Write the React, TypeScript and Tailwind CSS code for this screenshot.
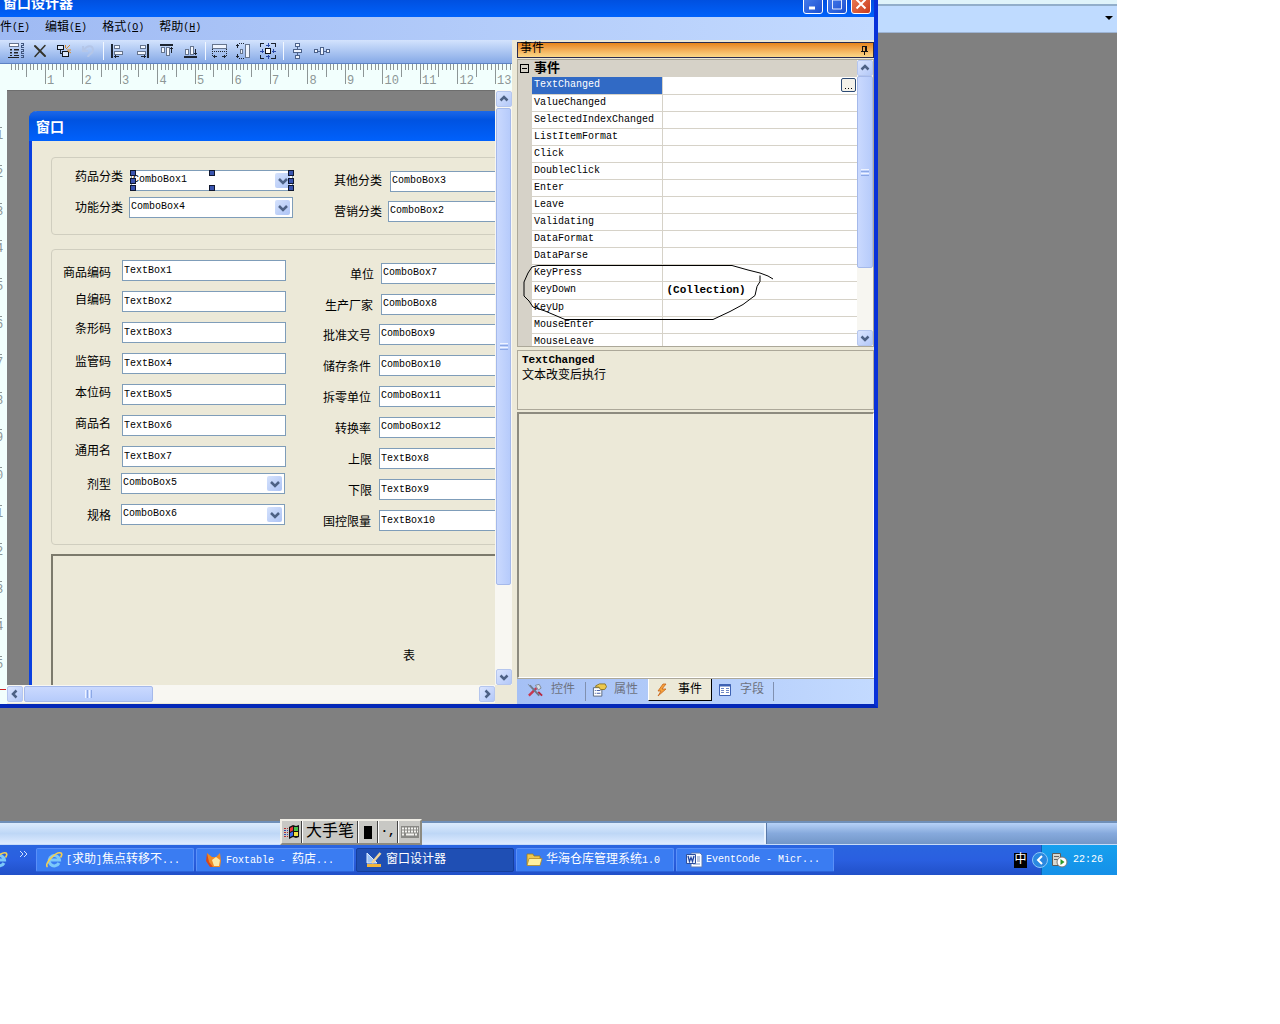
import type { ReactNode } from "react";

const MONO = "font-['Liberation_Mono','Noto_Sans_CJK_SC',monospace]";

/* Latin runs are set at 10px and Chinese runs at 12px, like a 12px bitmap face. */
function Mixed({ children }: { children: string }) {
  const parts = children.split(/([\u4e00-\u9fff]+)/).filter(Boolean);
  return (
    <>
      {parts.map((p, i) =>
        /[\u4e00-\u9fff]/.test(p) ? (
          <span key={i} className="text-[12px]">{p}</span>
        ) : (
          <span key={i}>{p}</span>
        )
      )}
    </>
  );
}

/* ---------- toolbar icons ---------- */
function Icon({ children }: { children: ReactNode }) {
  return (
    <svg width="18" height="18" viewBox="0 0 18 18" fill="none" stroke="#1c2430" strokeWidth="1" shapeRendering="crispEdges" className="shrink-0">
      {children}
    </svg>
  );
}

const tools: { name: string; icon: ReactNode }[][] = [
  [
    {
      name: "Tab 次序",
      icon: (
        <Icon>
          <path d="M2.500 1.500h9v3h-9z" stroke="#66758e" fill="#fff" />
          <path d="M3 7.500h2M7 7.500h5M3 10.500h2M7 10.500h4M3 13.500h2M7 13.500h5M1 15.500h11" stroke="#222" />
          <path d="M3 8.500h2M7 8.500h5M3 11.500h2M7 11.500h4" stroke="#66758e" />
          <path d="M14 1.500h2v2h-2v2h3M14 7.500h2v2h-2v2h3M14 13.500h2v2h-2" stroke="#40557c" />
        </Icon>
      ),
    },
    {
      name: "删除",
      icon: (
        <svg width="18" height="18" viewBox="0 0 18 18" fill="none" stroke="#33332a" strokeLinecap="round" className="shrink-0">
          <path d="M4 4l10 10" strokeWidth="2" />
          <path d="M14 3.500L4 14.500" strokeWidth="1.500" />
        </svg>
      ),
    },
    {
      name: "复制",
      icon: (
        <Icon>
          <path d="M2.500 3.500h6v4h-6zM7.500 9.500h6v5h-6z" stroke="#10151c" fill="#dce8fb" />
          <path d="M5.500 8v3.500h2" />
          <path d="M11 7l4-4M12 8h4M10.500 6V3M13 9l3 2" stroke="#d98b2b" shapeRendering="auto" />
        </Icon>
      ),
    },
    {
      name: "撤消",
      icon: (
        <svg width="18" height="18" viewBox="0 0 18 18" fill="none" stroke="#b4c6e8" strokeWidth="2" className="shrink-0">
          <path d="M5 8c3-5 9-5 9 0 0 4-5 4-5 7" />
          <path d="M4 4v5h5" />
        </svg>
      ),
    },
  ],
  [
    {
      name: "左对齐",
      icon: (
        <Icon>
          <path d="M3 2v14" strokeWidth="2" />
          <path d="M5.500 3.500h5v3h-5zM5.500 9.500h8v3h-8z" fill="#f4f8ff" stroke="#66758e" />
          <path d="M5 14.500h5M6.500 13v3" />
        </Icon>
      ),
    },
    {
      name: "右对齐",
      icon: (
        <Icon>
          <path d="M15 2v14" strokeWidth="2" />
          <path d="M7.500 3.500h5v3h-5zM4.500 9.500h8v3h-8z" fill="#f4f8ff" stroke="#66758e" />
          <path d="M8 14.500h5M11.500 13v3" />
        </Icon>
      ),
    },
    {
      name: "顶端对齐",
      icon: (
        <Icon>
          <path d="M3 3h13" strokeWidth="2" />
          <path d="M4.500 5.500h3v5h-3zM9.500 5.500h3v8h-3z" fill="#f4f8ff" stroke="#66758e" />
          <path d="M14.500 5v6M13 6.500h3" />
        </Icon>
      ),
    },
    {
      name: "底端对齐",
      icon: (
        <Icon>
          <path d="M3 15h13" strokeWidth="2" />
          <path d="M4.500 7.500h3v5h-3zM9.500 4.500h3v8h-3z" fill="#f4f8ff" stroke="#66758e" />
          <path d="M14.500 7v6M13 11.500h3" />
        </Icon>
      ),
    },
  ],
  [
    {
      name: "等宽",
      icon: (
        <Icon>
          <path d="M1.500 2.500h14v4h-14z" fill="#eef4ff" stroke="#66758e" />
          <path d="M1.500 7v8M15.500 7v8M3 9.500h12" strokeDasharray="1 1" />
          <path d="M2 14.500h4M11 14.500h4M3.500 13v3M13.500 13v3" />
        </Icon>
      ),
    },
    {
      name: "等高",
      icon: (
        <Icon>
          <path d="M10.500 2.500h4v13h-4z" fill="#eef4ff" stroke="#66758e" />
          <path d="M5.500 7.500h2v4h-2z" fill="#eef4ff" stroke="#66758e" />
          <path d="M4 1.500h6M4 16.500h6" strokeDasharray="1 1" />
          <path d="M2.500 2v4M2.500 12v4M1 3.500h3M1 14.500h3" />
        </Icon>
      ),
    },
    {
      name: "等大小",
      icon: (
        <Icon>
          <path d="M1.500 5V1.500H5M12 1.500h4.500V5M16.500 13v3.500H12M5 16.500H1.500V13" />
          <path d="M6.500 6.500h5v5h-5z" fill="#fff" stroke="#111" />
          <path d="M9 1v4M9 13v4M1 9h4M13 9h4M7 3.500h4M7 14.500h4M3.500 7v4M14.500 7v4" stroke="#2a49a8" />
        </Icon>
      ),
    },
  ],
  [
    {
      name: "垂直间距",
      icon: (
        <Icon>
          <path d="M6.500 1.500h4v3h-4zM4.500 7.500h8v3h-8zM6.500 13.500h4v3h-4zM8.500 5v2M8.500 11v2" fill="#eef4ff" stroke="#4c628a" />
        </Icon>
      ),
    },
    {
      name: "水平间距",
      icon: (
        <Icon>
          <path d="M1.500 7.500h3v3h-3zM7.500 5.500h3v7h-3zM13.500 7.500h3v3h-3zM5 9h2M11 9h2" fill="#eef4ff" stroke="#4c628a" />
        </Icon>
      ),
    },
  ],
];

/* ---------- rulers ---------- */
function TopRuler() {
  const ticks = Array.from({ length: 135 }, (_, i) => i + 1);
  return (
    <svg className="block h-[26px] w-full bg-[#f2fffd]" shapeRendering="crispEdges">
      {ticks.map((i) => {
        const x = Math.round(7 + i * 3.75);
        const h = i % 10 === 0 ? 20 : i % 5 === 0 ? 13 : 6;
        return <path key={i} d={`M${x + 0.5} 0v${h}`} stroke="#8d9696" />;
      })}
      {Array.from({ length: 13 }, (_, i) => (
        <text key={i} x={47 + i * 37.5} y="20" fontSize="12" fill="#8d9696" className={MONO}>
          {i + 1}
        </text>
      ))}
    </svg>
  );
}

function SideRuler() {
  const digits = ["1", "2", "3", "4", "5", "6", "7", "8", "9", "0", "1", "2", "3", "4", "5"];
  return (
    <svg className="block w-[7px] shrink-0 self-stretch bg-[#f2fffd]" shapeRendering="crispEdges">
      {digits.map((d, i) => (
        <g key={i}>
          <path d={`M0 ${Math.round(37 + i * 37.8)}.5h2`} stroke="#8d9696" />
          <text x="-4" y={49 + i * 37.8} fontSize="12" fill="#8d9696" className={MONO}>
            {d}
          </text>
        </g>
      ))}
      <path d="M0 599.5h6" stroke="#d02020" />
    </svg>
  );
}

/* ---------- scroll bars ---------- */
const chevrons = {
  up: "M4.500 9.500L8 6l3.500 3.500",
  down: "M4.500 6.500L8 10l3.500-3.500",
  left: "M9.500 4.500L6 8l3.500 3.500",
  right: "M6.500 4.500L10 8l-3.500 3.500",
};
function Arrow({ dir }: { dir: keyof typeof chevrons }) {
  return (
    <button
      type="button"
      aria-label={dir}
      className="flex size-4 shrink-0 items-center justify-center rounded-xs border border-[#b5c6ee] bg-linear-to-br from-[#dbe5fe] to-[#b3c8f8]"
    >
      <svg width="16" height="16" viewBox="0 0 16 16" fill="none" stroke="#4d6185" strokeWidth="2.500" className="shrink-0">
        <path d={chevrons[dir]} />
      </svg>
    </button>
  );
}

/* ---------- designer canvas ---------- */
type Control = { kind: "text" | "combo"; name: string; label: string; x: number; y: number; w: number; lx: number; ly: number };

const controls: Control[] = [
  { kind: "combo", name: "ComboBox1", label: "药品分类", x: 99, y: 29, w: 162, lx: 43, ly: 29 },
  { kind: "combo", name: "ComboBox4", label: "功能分类", x: 97, y: 56, w: 164, lx: 43, ly: 60 },
  { kind: "combo", name: "ComboBox3", label: "其他分类", x: 358, y: 30, w: 164, lx: 302, ly: 33 },
  { kind: "combo", name: "ComboBox2", label: "营销分类", x: 356, y: 60, w: 164, lx: 302, ly: 64 },
  { kind: "text", name: "TextBox1", label: "商品编码", x: 90, y: 119, w: 164, lx: 31, ly: 125 },
  { kind: "text", name: "TextBox2", label: "自编码", x: 90, y: 150, w: 164, lx: 43, ly: 152 },
  { kind: "text", name: "TextBox3", label: "条形码", x: 90, y: 181, w: 164, lx: 43, ly: 181 },
  { kind: "text", name: "TextBox4", label: "监管码", x: 90, y: 212, w: 164, lx: 43, ly: 214 },
  { kind: "text", name: "TextBox5", label: "本位码", x: 90, y: 243, w: 164, lx: 43, ly: 245 },
  { kind: "text", name: "TextBox6", label: "商品名", x: 90, y: 274, w: 164, lx: 43, ly: 276 },
  { kind: "text", name: "TextBox7", label: "通用名", x: 90, y: 305, w: 164, lx: 43, ly: 303 },
  { kind: "combo", name: "ComboBox5", label: "剂型", x: 89, y: 332, w: 164, lx: 55, ly: 337 },
  { kind: "combo", name: "ComboBox6", label: "规格", x: 89, y: 363, w: 164, lx: 55, ly: 368 },
  { kind: "combo", name: "ComboBox7", label: "单位", x: 349, y: 122, w: 164, lx: 318, ly: 127 },
  { kind: "combo", name: "ComboBox8", label: "生产厂家", x: 349, y: 153, w: 164, lx: 293, ly: 158 },
  { kind: "combo", name: "ComboBox9", label: "批准文号", x: 347, y: 183, w: 164, lx: 291, ly: 188 },
  { kind: "combo", name: "ComboBox10", label: "储存条件", x: 347, y: 214, w: 164, lx: 291, ly: 219 },
  { kind: "combo", name: "ComboBox11", label: "拆零单位", x: 347, y: 245, w: 164, lx: 291, ly: 250 },
  { kind: "combo", name: "ComboBox12", label: "转换率", x: 347, y: 276, w: 164, lx: 303, ly: 281 },
  { kind: "text", name: "TextBox8", label: "上限", x: 347, y: 307, w: 164, lx: 316, ly: 312 },
  { kind: "text", name: "TextBox9", label: "下限", x: 347, y: 338, w: 164, lx: 316, ly: 343 },
  { kind: "text", name: "TextBox10", label: "国控限量", x: 347, y: 369, w: 164, lx: 291, ly: 374 },
];

const handles = [
  [98, 29], [177, 29], [256, 29],
  [98, 37], [256, 37],
  [98, 44], [177, 44], [256, 44],
];

function FormControl({ c }: { c: Control }) {
  return (
    <>
      <label htmlFor={c.name} className="absolute text-[12px] leading-4 whitespace-nowrap" style={{ left: c.lx, top: c.ly }}>
        {c.label}
      </label>
      <div className="absolute h-[21px] border border-[#7f9db9] bg-white" style={{ left: c.x, top: c.y, width: c.w }}>
        {c.kind === "text" ? (
          <input id={c.name} defaultValue={c.name} className="block h-[18px] w-full bg-transparent px-px text-[10px] leading-4 outline-none" />
        ) : (
          <>
            <select id={c.name} className="block h-[18px] w-full appearance-none bg-transparent px-px text-[10px] leading-4 outline-none">
              <option>{c.name}</option>
            </select>
            <span className="pointer-events-none absolute top-0.5 right-0.5 flex size-[15px] items-center justify-center rounded-xs bg-linear-to-br from-[#d5e2fc] to-[#adc3f5]">
              <svg width="10" height="8" viewBox="0 0 10 8" fill="none" stroke="#4d6185" strokeWidth="2.500">
                <path d="M1 2l4 4 4-4" />
              </svg>
            </span>
          </>
        )}
      </div>
    </>
  );
}

function DesignedForm() {
  return (
    <section className="absolute top-5 -right-8 -bottom-8 left-[22px] flex flex-col rounded-tl-lg border-l-[3px] border-[#0a40e0] bg-[#ece9d8]">
      <h2 className="-ml-[3px] flex h-[30px] items-center rounded-tl-lg bg-linear-to-b from-[#1c68e8] from-0% via-[#0053e1] via-30% to-[#0061fc] pt-1 pl-[7px] text-[14px] leading-4 font-bold text-white">
        窗口
      </h2>
      <div className="relative flex-1">
        <fieldset className="absolute top-4 -right-4 left-[19px] h-[78px] rounded-sm border border-[#d0cebf]" />
        <fieldset className="absolute top-[108px] -right-4 left-[19px] h-[296px] rounded-sm border border-[#d0cebf]" />
        {controls.map((c) => (
          <FormControl key={c.name} c={c} />
        ))}
        {handles.map(([x, y]) => (
          <span key={`${x}-${y}`} className="absolute size-1.5 border border-[#101830] bg-[#3a55b0]" style={{ left: x, top: y }} />
        ))}
        <div className="absolute top-[413px] right-[-250px] bottom-0 left-[19px] border-t-2 border-l-2 border-[#7c7a6c]">
          <span className="absolute top-[93px] left-[350px] text-[12px] leading-4">表</span>
        </div>
      </div>
    </section>
  );
}

/* ---------- event list ---------- */
const events = [
  "TextChanged", "ValueChanged", "SelectedIndexChanged", "ListItemFormat", "Click", "DoubleClick", "Enter", "Leave",
  "Validating", "DataFormat", "DataParse", "KeyPress", "KeyDown", "KeyUp", "MouseEnter", "MouseLeave",
];

function EventPanel() {
  return (
    <aside className="flex w-[357px] shrink-0 flex-col pt-0.5">
      <header className="flex h-4 items-start justify-between border border-[#2a2c50] bg-linear-to-b from-[#e78414] to-[#fbd887] px-0.5">
        <h2 className="-mt-px text-[12px] leading-[14px]">事件</h2>
        <button type="button" aria-label="固定" className="pt-0.5 pr-0.5">
          <svg width="9" height="10" viewBox="0 0 9 10" fill="none" stroke="#111" shapeRendering="crispEdges">
            <path d="M2.500 6V1.500h4V6M5.500 1v5M1 6.500h7M4.500 7v3" />
          </svg>
        </button>
      </header>

      <div className="relative mt-px flex h-[288px] border border-[#aca899] bg-white">
        <div className="min-w-0 flex-1 overflow-hidden">
          <div className="flex h-[17px] items-center gap-[5px] bg-[#d6d2c8] pl-0.5">
            <button type="button" aria-label="折叠" className="flex size-[9px] items-center justify-center border border-black text-black">
              <span className="h-px w-[5px] bg-black" />
            </button>
            <h3 className="text-[13px] leading-4 font-bold">事件</h3>
          </div>
          <table className="w-full table-fixed border-collapse border-l-[14px] border-[#d6d2c8] text-[10px] leading-4">
            <tbody>
              {events.map((e, i) => (
                <tr key={e} className="h-[17px]">
                  <th
                    scope="row"
                    className={
                      i === 0
                        ? "h-[17px] w-[137px] border-r border-b border-[#d6d2c8] bg-[#316ac5] p-0 pl-0.5 text-left font-normal text-white"
                        : "h-[17px] w-[137px] border-r border-b border-[#d6d2c8] p-0 pl-0.5 text-left font-normal"
                    }
                  >
                    {e}
                  </th>
                  <td className="border-b border-[#d6d2c8] p-0 pl-1">
                    {i === 0 && (
                      <button type="button" aria-label="编辑事件" className="float-right mr-px flex h-[14px] w-[15px] items-center justify-center gap-0.5 rounded-xs border border-[#2c4a74] bg-[#f4f2ea] pt-1.5">
                        <i className="size-px bg-black" />
                        <i className="size-px bg-black" />
                        <i className="size-px bg-black" />
                      </button>
                    )}
                    {e === "KeyDown" && <b className="text-[11px] font-bold">(Collection)</b>}
                  </td>
                </tr>
              ))}
            </tbody>
          </table>
        </div>
        <div className="flex w-4 shrink-0 flex-col bg-[#f7f6f1]">
          <Arrow dir="up" />
          <div className="flex h-[192px] flex-col items-center justify-center gap-px rounded-xs border border-[#a5b9ea] bg-linear-to-r from-[#cad9fe] to-[#b6cbfb]">
            <i className="h-px w-2 bg-[#eef3ff]" />
            <i className="h-px w-2 bg-[#8ca8e6]" />
            <i className="h-px w-2 bg-[#eef3ff]" />
            <i className="h-px w-2 bg-[#8ca8e6]" />
          </div>
          <div className="flex-1" />
          <Arrow dir="down" />
        </div>
        <svg className="pointer-events-none absolute top-[204px] left-[4px]" width="256" height="60" viewBox="0 0 256 60" fill="none" stroke="#000">
          <path d="M251 15L246 12 238 9 226 6 210 1.500H16L10 3 6 9 2 18v14l5 5 4 6 12 4 20 8.500h148l17-8 13-7 12-9 2-9 3-5v-6" />
        </svg>
      </div>

      <div className="mt-[3px] h-[60px] border border-[#aca899] px-1 pt-0.5 leading-4">
        <h3 className="text-[11px] leading-[15px] font-bold">TextChanged</h3>
        <p className="text-[12px] leading-4">文本改变后执行</p>
      </div>
      <div className="mt-0.5 h-[266px] border-t-2 border-r border-b border-l-2 border-t-[#8d8b7f] border-r-white border-b-white border-l-[#8d8b7f]" />

      <div role="tablist" className="flex h-[26px] items-start border-t border-[#aca899] bg-linear-to-r from-[#a5c0f5] to-[#c3daff] text-[12px] leading-4 text-[#6d7280]">
        <button type="button" role="tab" className="flex h-[22px] items-center gap-2 pl-[10px]">
          <svg width="16" height="16" viewBox="0 0 17 16" fill="none">
            <path d="M2 14l8-8" stroke="#c8374f" strokeWidth="2.500" />
            <path d="M3 3l10 11" stroke="#6c7888" strokeWidth="2" />
            <path d="M1 2l4 3M9 3l4-1 2 4-3 2z" stroke="#7d8794" fill="#d8dde4" />
            <path d="M12 10l4 4" stroke="#b6273e" strokeWidth="2" />
          </svg>
          控件
        </button>
        <span className="mx-[6px] ml-[10px] h-[19px] w-px self-center bg-[#8090b0]" />
        <button type="button" role="tab" className="flex h-[22px] items-center gap-[7px]">
          <svg width="15" height="16" viewBox="0 0 16 16">
            <path d="M1.500 5.500h9v9h-9z" fill="#fff" stroke="#58657c" />
            <path d="M3 8.500h1M3 11.500h1M5 8.500h4M5 11.500h4" stroke="#3a54a0" />
            <path d="M4 3.500l4-2h6l1.500 3-2 3H9L7.500 5H4z" fill="#edc84c" stroke="#8b752a" />
          </svg>
          属性
        </button>
        <button type="button" role="tab" aria-selected="true" className="ml-[10px] flex h-[22px] w-16 items-center gap-[9px] border-r border-b border-l border-r-black border-b-black border-l-white bg-[#ece9d8] pl-1.5 text-black">
          <svg width="14" height="16" viewBox="0 0 14 16">
            <path d="M8 2L3 9h3l-3 5 8-7H7l4-5z" fill="#f6a33c" stroke="#c8641c" strokeWidth=".8" />
          </svg>
          事件
        </button>
        <button type="button" role="tab" className="flex h-[22px] items-center gap-[8px] pl-[6px]">
          <svg width="14" height="14" viewBox="0 0 14 14">
            <path d="M1.500 1.500h11v11h-11z" fill="#fff" stroke="#3e62b4" />
            <path d="M1 2.500h12" stroke="#3e62b4" strokeWidth="2" />
            <path d="M3 5.500h3M3 7.500h3M3 9.500h3M8 5.500h3M8 7.500h3M8 9.500h3" stroke="#6d87c4" />
          </svg>
          字段
        </button>
        <span className="ml-[9px] h-[19px] w-px self-center bg-[#8090b0]" />
      </div>
    </aside>
  );
}

/* ---------- designer window ---------- */
const menus = [["件", "F"], ["编辑", "E"], ["格式", "O"], ["帮助", "H"]];

function DesignerWindow() {
  return (
    <main className="flex min-w-0 flex-1 flex-col border-r-4 border-b-4 border-[#0831d9] border-b-[#0428b8]">
      <header className="flex h-[17px] items-start justify-between overflow-hidden bg-linear-to-b from-[#0050e0] to-[#0062fb] pl-[3px]">
        <h1 className="-mt-1 text-[14px] leading-4 font-bold text-white">窗口设计器</h1>
        <div className="-mt-1.5 flex gap-1 pr-[3px]">
          <button type="button" aria-label="最小化" className="h-5 w-5 rounded-[3px] border border-white bg-linear-to-br from-[#4a80ee] to-[#1c4fd0]">
            <svg viewBox="0 0 18 18"><path d="M5 13h6" stroke="#fff" strokeWidth="3" /></svg>
          </button>
          <button type="button" aria-label="最大化" className="h-5 w-5 rounded-[3px] border border-white bg-linear-to-br from-[#4a80ee] to-[#1c4fd0]">
            <svg viewBox="0 0 18 18"><path d="M4.500 5h9v9h-9z" stroke="#dfe9ff" fill="none" strokeWidth="1" /></svg>
          </button>
          <button type="button" aria-label="关闭" className="h-5 w-5 rounded-[3px] border border-white bg-linear-to-br from-[#ee8058] to-[#c9391a]">
            <svg viewBox="0 0 18 18"><path d="M4.500 4.500l9 9M13.500 4.500l-9 9" stroke="#fff" strokeWidth="2" /></svg>
          </button>
        </div>
      </header>

      <nav className="flex h-[23px] items-center gap-[15px] bg-linear-to-r from-[#9fbaf3] to-[#c3daff] pb-0.5">
        {menus.map(([t, k]) => (
          <button key={k} type="button" className="flex items-center text-[12px] leading-4">
            {t}
            <span className="text-[10px]">(<u>{k}</u>)</span>
          </button>
        ))}
      </nav>

      <div className="flex flex-1 bg-[#ece9d8]">
        <div className="flex min-w-0 flex-1 flex-col">
          <div role="toolbar" className="flex h-6 items-center border-b border-[#5d82c4] bg-linear-to-b from-[#d3e3fd] to-[#86a9e6] pb-px pl-1">
            {tools.map((group, g) => (
              <div key={g} className="flex items-center">
                {g > 0 && <span className="mr-0.5 ml-[3px] h-[18px] w-px bg-[#f2f7ff]" />}
                {group.map((t) => (
                  <button key={t.name} type="button" aria-label={t.name} className="flex w-6 justify-center">
                    {t.icon}
                  </button>
                ))}
              </div>
            ))}
          </div>
          <TopRuler />
          <div className="flex min-h-0 flex-1">
            <SideRuler />
            <div className="flex min-w-0 flex-1 flex-col">
              <div className="flex flex-1">
                <div className="relative flex-1 overflow-hidden border-t border-[#6e6e6e] bg-[#808080]">
                  <DesignedForm />
                </div>
                <div className="flex w-[17px] shrink-0 flex-col items-center bg-[#f8f7f2] pt-px">
                  <Arrow dir="up" />
                  <div className="mt-px flex h-[477px] w-[15px] flex-col items-center justify-center gap-px rounded-xs border border-[#a5b9ea] bg-linear-to-r from-[#cad9fe] to-[#b6cbfb]">
                    <i className="h-px w-2 bg-[#eef3ff]" />
                    <i className="h-px w-2 bg-[#8ca8e6]" />
                    <i className="h-px w-2 bg-[#eef3ff]" />
                    <i className="h-px w-2 bg-[#8ca8e6]" />
                  </div>
                  <div className="flex-1" />
                  <Arrow dir="down" />
                </div>
              </div>
              <div className="flex h-[19px] pr-[17px]">
                <div className="flex h-[18px] flex-1 items-center bg-[#f8f7f2]">
                  <Arrow dir="left" />
                  <div className="ml-px flex h-4 w-[129px] items-center justify-center gap-px rounded-xs border border-[#a5b9ea] bg-linear-to-b from-[#cad9fe] to-[#b6cbfb]">
                    <i className="h-2 w-px bg-[#eef3ff]" />
                    <i className="h-2 w-px bg-[#8ca8e6]" />
                    <i className="h-2 w-px bg-[#eef3ff]" />
                    <i className="h-2 w-px bg-[#8ca8e6]" />
                  </div>
                  <div className="flex-1" />
                  <Arrow dir="right" />
                </div>
              </div>
            </div>
          </div>
        </div>
        <div className="w-[5px] shrink-0" />
        <EventPanel />
      </div>
    </main>
  );
}

/* ---------- taskbar ---------- */
function IeIcon() {
  return (
    <svg width="18" height="18" viewBox="0 0 18 18" fill="none" className="shrink-0">
      <path d="M14 12A5.200 5.200 0 1 1 14.500 9H5" stroke="#7cc8fa" strokeWidth="3" />
      <path d="M2.500 16C-1.500 13 11 0 16 2c1.500 1 .5 3-.5 4.500" stroke="#f5cf50" strokeWidth="1.600" />
    </svg>
  );
}

const tasks: { title: string; active?: boolean; icon: ReactNode }[] = [
  { title: "[求助]焦点转移不...", icon: <IeIcon /> },
  {
    title: "Foxtable - 药店...",
    icon: (
      <svg width="18" height="18" viewBox="0 0 18 18" className="shrink-0">
        <path d="M2 2l5 4 4 0 4-4 1 8-1 6H6l-4-5z" fill="#f08a24" />
        <path d="M7 9l4-3 4 3-1 6H9z" fill="#fbe8a8" />
        <path d="M2 2l2 9 4 5H5L1 10z" fill="#d8481c" />
      </svg>
    ),
  },
  {
    title: "窗口设计器",
    active: true,
    icon: (
      <svg width="18" height="18" viewBox="0 0 18 18" className="shrink-0">
        <path d="M2 2v10h10z" fill="#9ec4f4" stroke="#dcebff" />
        <path d="M2 13h14v3H2z" fill="#f1b43c" />
        <path d="M15.500 2L7 12" stroke="#f0d49a" strokeWidth="2.500" />
      </svg>
    ),
  },
  {
    title: "华海仓库管理系统1.0",
    icon: (
      <svg width="18" height="18" viewBox="0 0 18 18" className="shrink-0">
        <path d="M2 5V3h6l1 2h6v9H2z" fill="#f0c850" stroke="#9a7a20" strokeWidth=".8" />
        <path d="M4 7.500h13l-2 7H2z" fill="#fff0a0" stroke="#b08a28" strokeWidth=".8" />
      </svg>
    ),
  },
  {
    title: "EventCode - Micr...",
    icon: (
      <svg width="18" height="18" viewBox="0 0 18 18" className="shrink-0">
        <path d="M6 2h9l2 2v12H6z" fill="#fff" stroke="#5878b8" />
        <path d="M12 6h3M12 8h3M12 10h3M8 13h7" stroke="#7b93c4" />
        <path d="M1.500 3.500h9v9h-9z" fill="#e8effc" stroke="#2c4e9c" />
        <path d="M3 5l1.500 5.500L6 6.500l1.500 4L9 5" fill="none" stroke="#2246a0" strokeWidth="1.300" />
      </svg>
    ),
  },
];

function Taskbar() {
  return (
    <footer className="flex h-[30px] items-center bg-linear-to-b from-[#2a65e0] via-[#2a5fe0] to-[#2150c8] text-[10px] leading-4 text-white">
      <div className="flex w-9 shrink-0 items-center overflow-hidden">
        <span className="-ml-[10px]"><IeIcon /></span>
        <svg width="10" height="8" viewBox="0 0 10 8" fill="none" stroke="#cfe0ff" className="mb-3 ml-[11px] shrink-0">
          <path d="M1 1l3 3-3 3M5 1l3 3-3 3" />
        </svg>
      </div>
      <div className="flex min-w-0 flex-1 gap-0.5">
        {tasks.map((t) => (
          <button
            key={t.title}
            type="button"
            className={
              t.active
                ? "flex h-6 w-[158px] items-center gap-[3px] overflow-hidden rounded-xs border border-[#163f9c] bg-[#1f4fb4] pl-2 whitespace-nowrap"
                : "flex h-6 w-[158px] items-center gap-[3px] overflow-hidden rounded-xs border border-[#5a90f8] border-b-[#2c63d8] bg-[#3a7cf2] pl-2 whitespace-nowrap"
            }
          >
            {t.icon}
            <span className="leading-4"><Mixed>{t.title}</Mixed></span>
          </button>
        ))}
      </div>
      <span className="flex h-[15px] w-[13px] items-center justify-center bg-black text-[12px]">中</span>
      <div className="ml-[14px] flex h-full w-[76px] items-center border-l border-[#0c60b8] bg-linear-to-b from-[#16a0ee] to-[#1590e8]">
        <button type="button" aria-label="显示隐藏的图标" className="-ml-[10px] flex size-4 shrink-0 items-center justify-center rounded-full border border-[#8cc8f8] bg-[#2a88e0]">
          <svg width="8" height="10" viewBox="0 0 8 10" fill="none" stroke="#fff" strokeWidth="2"><path d="M6 1L2 5l4 4" /></svg>
        </button>
        <svg width="17" height="18" viewBox="0 0 17 18" className="ml-[3px] shrink-0">
          <path d="M1.500 2.500h8v12h-8z" fill="#d8d8d0" stroke="#5c5c58" />
          <path d="M3 5.500h5M3 8.500h5" stroke="#666" />
          <circle cx="11" cy="11" r="5" fill="#fff" stroke="#777" />
          <path d="M9.500 8v6l4-3z" fill="#2c9a2c" />
        </svg>
        <time className="ml-[5px]">22:26</time>
      </div>
    </footer>
  );
}

function ImeBar() {
  return (
    <div role="toolbar" aria-label="输入法" className="absolute -top-1 left-[280px] flex h-[26px] w-[142px] items-stretch border-2 border-[#f0eee6] border-r-[#8c8a80] border-b-[#8c8a80] bg-[#c8c8c4] text-black">
      <button type="button" aria-label="Windows" className="flex w-5 shrink-0 items-center justify-center border-r border-[#444]">
        <svg width="17" height="16" viewBox="0 0 17 16" className="shrink-0">
          <path d="M6 3l4-2 3 1 3-1v12l-3 1-3-1-4 2z" fill="#111" />
          <path d="M7 4l3-1.500v4L7 8z" fill="#e83838" />
          <path d="M11 3l4 0v4h-4z" fill="#48c048" />
          <path d="M7 9l3-1.500v4L7 13z" fill="#3c6cf0" />
          <path d="M11 8h4v4h-4z" fill="#f0e040" />
          <path d="M1 4.500h4M1 8.500h4M1 12.500h4" stroke="#b03030" strokeDasharray="2 1" />
          <path d="M1 6.500h4M1 10.500h4" stroke="#3048b0" strokeDasharray="2 1" />
        </svg>
      </button>
      <button type="button" className="w-[56px] shrink-0 border-r border-l border-[#444] border-l-white text-[16px] leading-5 whitespace-nowrap">大手笔</button>
      <button type="button" aria-label="半角" className="flex w-5 shrink-0 items-center justify-center border-r border-l border-[#444] border-l-white">
        <span className="h-[13px] w-2 bg-black" />
      </button>
      <button type="button" aria-label="标点" className="w-5 shrink-0 border-r border-l border-[#444] border-l-white text-[12px] font-bold">·,</button>
      <button type="button" aria-label="软键盘" className="flex flex-1 items-center justify-center border-l border-white">
        <svg width="18" height="12" viewBox="0 0 18 12" className="shrink-0">
          <path d="M0 0h18v12H0z" fill="#8a8a86" />
          <path d="M1 2.500h16M1 5.500h16M1 8.500h3M14 8.500h3" stroke="#f4f4f0" strokeWidth="2" strokeDasharray="2 1" />
          <path d="M5 8.500h8" stroke="#f4f4f0" strokeWidth="2" />
        </svg>
      </button>
    </div>
  );
}

export default function App() {
  return (
    <div className={`min-h-screen bg-white pr-[163px] text-black ${MONO}`}>
      <div className="flex flex-col bg-[#808080]">
        <div className="flex items-stretch">
          <DesignerWindow />
          <div className="w-[239px] shrink-0">
            <div className="h-1.5 border-b-2 border-[#92aeca] bg-[#dff3fa]" />
            <div className="flex h-[27px] items-center justify-end border-b border-[#9db4d4] bg-[#bfdbff] pr-1 pb-0.5">
              <button type="button" aria-label="更多">
                <svg width="8" height="5" viewBox="0 0 8 5"><path d="M0 0h8L4 4z" fill="#000" /></svg>
              </button>
            </div>
          </div>
        </div>
        <div className="relative mt-[113px] flex h-6 border-t-2 border-b border-t-[#6f8fb8] border-b-[#c8dcf8]">
          <div className="flex-1 border-r-2 border-[#e8f2ff] bg-linear-to-b from-[#dcebfd] via-[#bed7f6] to-[#deebff]" />
          <div className="w-[351px] border-l border-[#5878a8] bg-linear-to-b from-[#b7d2f7] via-[#86a9dc] to-[#7397c8]" />
          <ImeBar />
        </div>
        <Taskbar />
      </div>
    </div>
  );
}
